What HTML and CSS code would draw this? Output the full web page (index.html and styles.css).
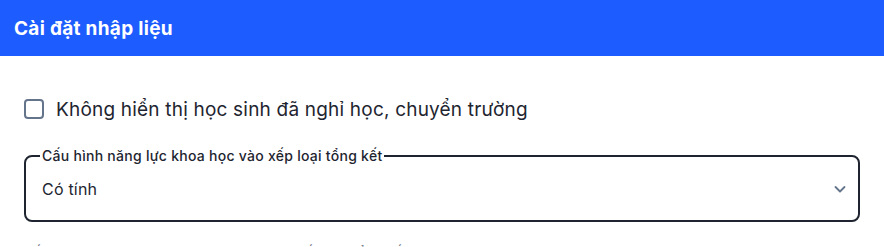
FILE: index.html
```html
<!DOCTYPE html>
<html lang="vi">
<head>
    <meta charset="UTF-8">
    <meta name="viewport" content="width=device-width, initial-scale=1.0">
    <title>Cài đặt nhập liệu</title>
    <link rel="stylesheet" href="styles.css">
</head>
<body>
    <div class="dialog">
        <div class="dialog-header">Cài đặt nhập liệu</div>

        <div class="dialog-body">
            <label class="check-row">
                <span class="check-box"></span>
                <span>Không hiển thị học sinh đã nghỉ học, chuyển trường</span>
            </label>

            <fieldset class="select-field">
                <legend>Cấu hình năng lực khoa học vào xếp loại tổng kết</legend>
                <div class="select-value">
                    <span>Có tính</span>
                    <svg class="chevron" width="16" height="16" viewBox="0 0 16 16" fill="none">
                        <path d="M3.5 6l4.5 4.5 4.5-4.5" stroke="#64748b" stroke-width="1.8" stroke-linecap="round" stroke-linejoin="round"/>
                    </svg>
                </div>
            </fieldset>

            <p class="helper">Kết quả năng lực khoa học được tính vào xếp loại tổng kết</p>
        </div>
    </div>
</body>
</html>
```

FILE: styles.css
```css
body {
    margin: 0;
    font-family: Inter, "Noto Sans", sans-serif;
    color: #1e2530;
    background: #fff;
    overflow: hidden;
}
.dialog {
    height: 247px;
    overflow: hidden;
}
.dialog-header {
    background-color: #1d5cff;
    color: #fff;
    font-size: 19px;
    font-weight: 700;
    letter-spacing: 0.3px;
    height: 56px;
    padding: 0 14px;
    display: flex;
    align-items: center;
}
.dialog-body {
    padding: 42px 24px 0 24px;
}
.check-row {
    display: flex;
    align-items: center;
    gap: 12px;
    font-size: 19px;
    letter-spacing: 0.2px;
    height: 22px;
}
.check-box {
    width: 16px;
    height: 16px;
    border: 2px solid #64748b;
    border-radius: 4px;
    flex: none;
}
.select-field {
    margin: 28px 0 0 0;
    border: 2px solid #1e2530;
    border-radius: 8px;
    padding: 0 16px;
    min-width: 0;
}
.select-field legend {
    font-size: 14px;
    font-weight: 500;
    letter-spacing: 0.27px;
    padding: 0 2px;
    margin-left: -2px;
    line-height: 16px;
}
.select-value {
    display: flex;
    align-items: center;
    justify-content: space-between;
    font-size: 16px;
    letter-spacing: 0.2px;
    height: 50px;
    padding-bottom: 6px;
}
.chevron {
    margin-right: -6px;
}
.helper {
    margin: 22px 0 0 0;
    font-size: 14px;
    color: #6b7280;
}
```
